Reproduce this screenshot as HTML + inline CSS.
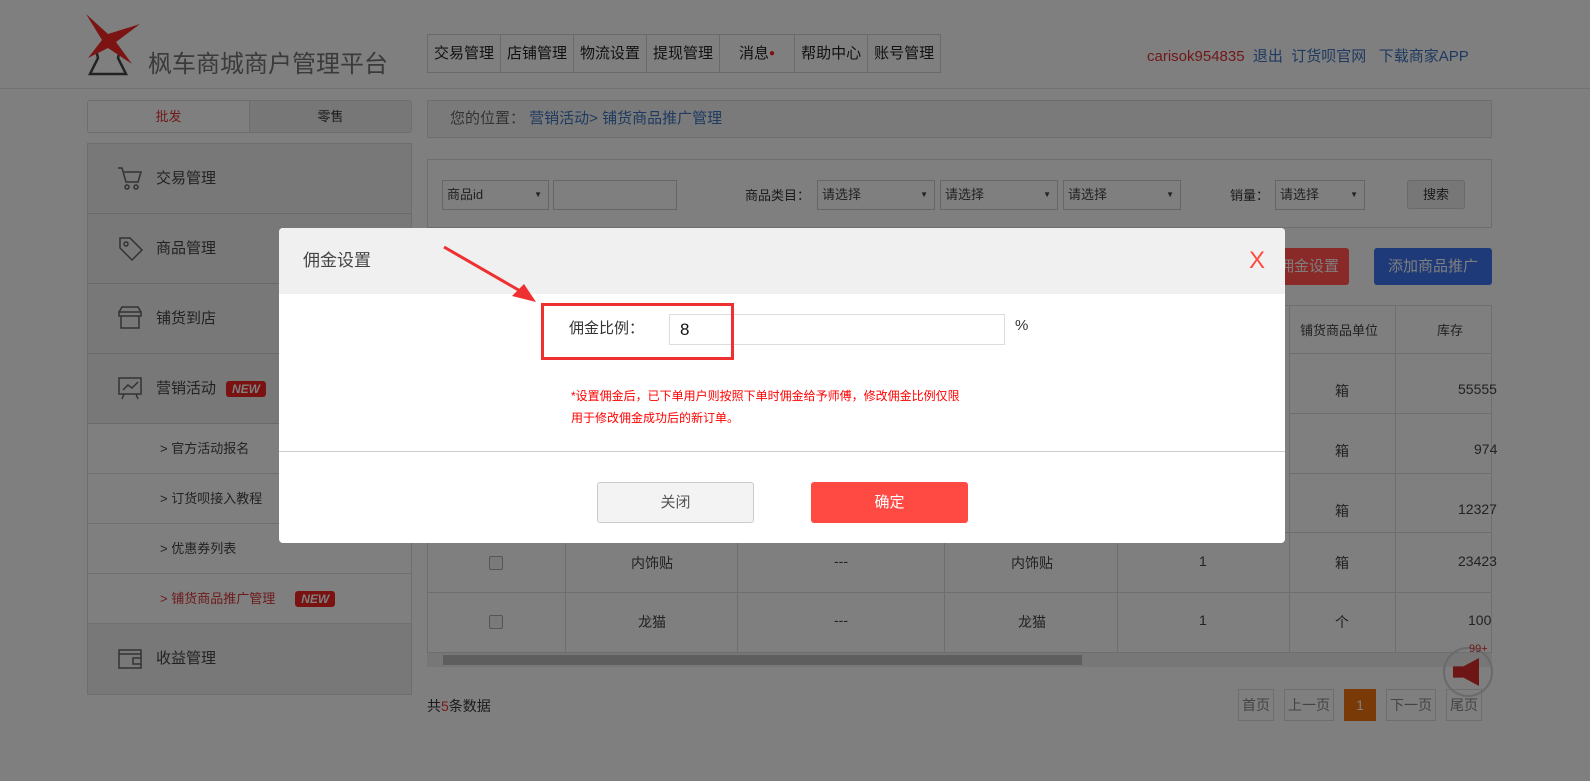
<!DOCTYPE html>
<html><head><meta charset="utf-8"><style>
*{margin:0;padding:0;box-sizing:border-box}
body{width:1590px;height:781px;background:#7f7f7f;font-family:"Liberation Sans","Noto Sans CJK SC",sans-serif;font-size:14px;color:#1a1a1a;position:relative;overflow:hidden}
.a{position:absolute}
.nav{top:34px;left:427px;height:39px;display:flex;border:1px solid #6a6a6a}
.nav div{border-right:1px solid #6a6a6a;padding:0 6px;line-height:37px;font-size:15px;color:#111}
.side{left:87px;width:325px;border:1px solid #6e6e6e;background:#787878}
.si{height:70px;border-bottom:1px solid #6a6a6a;line-height:70px;padding-left:68px;font-size:15px;color:#222;position:relative}
.si svg{position:absolute;left:28px;top:20px}
.sub{height:50px;border-bottom:1px solid #6f6f6f;line-height:50px;padding-left:72px;font-size:13px;color:#222;background:#7f7f7f}
.new{display:inline-block;background:#7a1212;color:#7f7f7f;font-size:12px;font-style:italic;font-weight:bold;padding:0 6px;line-height:16px;margin-left:10px;border-radius:3px}
.sel{height:30px;border:1px solid #666;font-size:13px;line-height:28px;padding-left:4px;color:#222}
.sel:after{content:"▼";position:absolute;right:6px;top:0;font-size:8px;color:#222}
.td{position:absolute;text-align:center;font-size:14px;color:#222}
.pg{border:1px solid #6e6e6e;height:32px;line-height:30px;font-size:14px;color:#444;padding:0 3px}
</style></head><body>
<svg class="a" style="left:72px;top:8px" width="80" height="70" viewBox="0 0 80 70"><polygon points="36,30 48,42 46,50 54,66 18,66 26,50 24,42" fill="none" stroke="#222" stroke-width="2.5"/><path d="M14 6 L36 26 L68 16 L44 34 L60 56 L36 40 L16 50 L30 32 Z" fill="#7d1414"/></svg>
<div class="a" style="left:148px;top:44px;font-size:24px;color:#3a3a3a">枫车商城商户管理平台</div>
<div class="a nav"><div>交易管理</div><div>店铺管理</div><div>物流设置</div><div>提现管理</div><div style="width:75px;text-align:center">消息<span style="color:#7a1010;font-size:10px;vertical-align:top">●</span></div><div>帮助中心</div><div style="border:none">账号管理</div></div>
<div class="a" style="left:1147px;top:45px;font-size:15px"><span style="color:#701818">carisok954835</span> <span style="color:#1f3a60">&nbsp;退出 &nbsp;订货呗官网 &nbsp;&nbsp;下载商家APP</span></div>
<div class="a" style="left:0;top:88px;width:1590px;height:1px;background:#727272"></div>
<div class="a" style="left:87px;top:100px;width:325px;height:33px;border:1px solid #6e6e6e;display:flex;border-radius:3px">
<div style="width:162px;text-align:center;line-height:31px;color:#6e1a1a;border-right:1px solid #6e6e6e;font-size:13px">批发</div><div style="flex:1;text-align:center;line-height:31px;font-size:13px;background:#777">零售</div></div>
<div class="a side" style="top:143px">
<div class="si"><svg width="28" height="28" fill="none" stroke="#333" stroke-width="1.5"><path d="M2 4h4l4 14h12l3-10H8"/><circle cx="11" cy="23" r="2"/><circle cx="20" cy="23" r="2"/></svg>交易管理</div>
<div class="si"><svg width="28" height="28" fill="none" stroke="#333" stroke-width="1.5"><path d="M4 4h10l12 12-10 10L4 14z"/><circle cx="10" cy="10" r="2"/></svg>商品管理</div>
<div class="si"><svg width="28" height="28" fill="none" stroke="#333" stroke-width="1.5"><path d="M3 8h22v4H3zM5 12v12h18V12M3 8l3-5h16l3 5"/></svg>铺货到店</div>
<div class="si"><svg width="28" height="28" fill="none" stroke="#333" stroke-width="1.5"><path d="M3 4h22v16H3zM7 16l5-5 4 3 6-6M8 20l-2 5M20 20l2 5"/></svg>营销活动<span class="new">NEW</span></div>
<div class="sub">&gt; 官方活动报名</div><div class="sub">&gt; 订货呗接入教程</div><div class="sub">&gt; 优惠券列表</div><div class="sub" style="color:#6e1a1a">&gt; 铺货商品推广管理<span class="new" style="margin-left:20px">NEW</span></div>
<div class="si" style="border:none"><svg width="28" height="28" fill="none" stroke="#333" stroke-width="1.5"><path d="M3 6h22v18H3zM3 10h22M17 14h8v6h-8z"/></svg>收益管理</div></div>
<div class="a" style="left:427px;top:100px;width:1065px;height:38px;border:1px solid #6e6e6e;background:#7a7a7a;line-height:36px;padding-left:22px;font-size:15px;color:#333">您的位置： <span style="color:#1f3a60">营销活动&gt; 铺货商品推广管理</span></div>
<div class="a" style="left:427px;top:159px;width:1065px;height:69px;border:1px solid #6e6e6e"></div>
<div class="a sel" style="left:442px;top:180px;width:107px">商品id</div>
<div class="a" style="left:553px;top:180px;width:124px;height:30px;border:1px solid #666"></div>
<div class="a" style="left:745px;top:185px;font-size:13px">商品类目：</div>
<div class="a sel" style="left:817px;top:180px;width:118px">请选择</div>
<div class="a sel" style="left:940px;top:180px;width:118px">请选择</div>
<div class="a sel" style="left:1063px;top:180px;width:118px">请选择</div>
<div class="a" style="left:1230px;top:185px;font-size:13px">销量：</div>
<div class="a sel" style="left:1275px;top:180px;width:90px">请选择</div>
<div class="a" style="left:1407px;top:180px;width:58px;height:29px;border:1px solid #6a6a6a;border-radius:3px;background:#777;text-align:center;line-height:27px;font-size:13px">搜索</div>
<div class="a" style="left:1270px;top:248px;width:79px;height:37px;background:#8a2a28;border-radius:3px;color:#7f7f7f;font-size:15px;line-height:37px;text-align:right;padding-right:10px">佣金设置</div>
<div class="a" style="left:1374px;top:248px;width:118px;height:37px;background:#1f3a78;border-radius:3px;color:#7f7f7f;font-size:15px;line-height:37px;text-align:center">添加商品推广</div>
<div class="a" style="left:427px;top:305px;width:1065px;height:348px;border:1px solid #6e6e6e"></div>
<div class="a" style="left:1289px;top:305px;width:1px;height:348px;background:#6e6e6e"></div>
<div class="a" style="left:1395px;top:305px;width:1px;height:348px;background:#6e6e6e"></div>
<div class="a" style="left:427px;top:532px;width:1065px;height:1px;background:#6e6e6e"></div>
<div class="a" style="left:427px;top:592px;width:1065px;height:1px;background:#6e6e6e"></div>
<div class="a" style="left:1289px;top:413px;width:203px;height:1px;background:#6e6e6e"></div>
<div class="a" style="left:1289px;top:473px;width:203px;height:1px;background:#6e6e6e"></div>
<div class="a" style="left:1289px;top:353px;width:203px;height:1px;background:#6e6e6e"></div>
<div class="a" style="left:565px;top:532px;width:1px;height:121px;background:#6e6e6e"></div>
<div class="a" style="left:737px;top:532px;width:1px;height:121px;background:#6e6e6e"></div>
<div class="a" style="left:944px;top:532px;width:1px;height:121px;background:#6e6e6e"></div>
<div class="a" style="left:1117px;top:532px;width:1px;height:121px;background:#6e6e6e"></div>
<div class="td" style="left:1300px;top:320px;font-size:13px">铺货商品单位</div>
<div class="td" style="left:1437px;top:320px;font-size:13px">库存</div>
<div class="td" style="left:1335px;top:381px">箱</div><div class="td" style="left:1458px;top:381px">55555</div>
<div class="td" style="left:1335px;top:441px">箱</div><div class="td" style="left:1474px;top:441px">974</div>
<div class="td" style="left:1335px;top:501px">箱</div><div class="td" style="left:1458px;top:501px">12327</div>
<div class="a" style="left:489px;top:556px;width:14px;height:14px;border:1px solid #555;border-radius:2px;background:#7a7a7a"></div>
<div class="a" style="left:489px;top:615px;width:14px;height:14px;border:1px solid #555;border-radius:2px;background:#7a7a7a"></div>
<div class="td" style="left:631px;top:553px">内饰贴</div><div class="td" style="left:834px;top:553px">---</div><div class="td" style="left:1011px;top:553px">内饰贴</div><div class="td" style="left:1199px;top:553px">1</div><div class="td" style="left:1335px;top:553px">箱</div><div class="td" style="left:1458px;top:553px">23423</div>
<div class="td" style="left:638px;top:612px">龙猫</div><div class="td" style="left:834px;top:612px">---</div><div class="td" style="left:1018px;top:612px">龙猫</div><div class="td" style="left:1199px;top:612px">1</div><div class="td" style="left:1335px;top:612px">个</div><div class="td" style="left:1468px;top:612px">100</div>
<div class="a" style="left:427px;top:653px;width:1065px;height:14px;background:#777"></div>
<div class="a" style="left:443px;top:655px;width:639px;height:10px;background:#5e5e5e"></div>
<div class="a" style="left:427px;top:696px;font-size:14px">共<span style="color:#7a1a1a">5</span>条数据</div>
<div class="a" style="left:1238px;top:689px;display:flex;gap:10px"><div class="pg">首页</div><div class="pg">上一页</div><div class="pg" style="background:#7a3a08;color:#7f7f7f;width:32px;text-align:center;border-color:#7a3a08">1</div><div class="pg">下一页</div><div class="pg">尾页</div></div>
<div class="a" style="left:1443px;top:647px;width:50px;height:50px;border-radius:50%;border:2px solid #6a6a6a"></div>
<div class="a" style="left:1453px;top:658px;width:26px;height:28px;background:#6e1616;clip-path:polygon(0 30%,40% 30%,100% 0,100% 100%,40% 70%,0 70%)"></div>
<div class="a" style="left:1469px;top:643px;font-size:11px;color:#6e1616">99+</div>
<div class="a" style="left:279px;top:228px;width:1006px;height:315px;background:#fff;border-radius:4px;overflow:hidden">
<div style="height:66px;background:#f0f0f0;line-height:66px;padding-left:24px;font-size:17px;color:#444">佣金设置<span style="position:absolute;right:20px;top:0;color:#ff4a40;font-size:24px">X</span></div>
<div style="position:absolute;left:290px;top:89px;font-size:15px;color:#333">佣金比例：</div>
<div style="position:absolute;left:390px;top:86px;width:336px;height:31px;border:1px solid #ddd;font-size:17px;line-height:30px;padding-left:10px;color:#111">8</div>
<div style="position:absolute;left:736px;top:89px;font-size:15px;color:#333">%</div>
<div style="position:absolute;left:262px;top:75px;width:193px;height:57px;border:3px solid #ee3030"></div>
<div style="position:absolute;left:292px;top:157px;font-size:12px;color:#f00;line-height:22px">*设置佣金后，已下单用户则按照下单时佣金给予师傅，修改佣金比例仅限<br>用于修改佣金成功后的新订单。</div>
<div style="position:absolute;left:0;top:223px;width:1006px;height:1px;background:#ccc"></div>
<div style="position:absolute;left:318px;top:254px;width:157px;height:41px;border:1px solid #ccc;border-radius:3px;background:#f3f3f3;text-align:center;line-height:39px;font-size:15px;color:#555">关闭</div>
<div style="position:absolute;left:532px;top:254px;width:157px;height:41px;border-radius:3px;background:#ff4a44;text-align:center;line-height:41px;font-size:15px;color:#fff">确定</div>
</div>
<svg class="a" style="left:440px;top:244px" width="100" height="62"><path d="M4 3 L82 48" stroke="#ee3030" stroke-width="3"/><polygon points="96,58 72,52 84,40" fill="#ee3030"/></svg>
</body></html>
